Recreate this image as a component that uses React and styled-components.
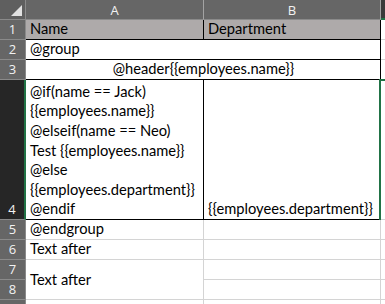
import React from 'react'
import styled, { createGlobalStyle } from 'styled-components'

const GlobalStyle = createGlobalStyle`
  html, body { margin: 0; padding: 0; background: #ffffff; }
`

// row 9 is only a sliver at the bottom edge, its number is not in view
const rows = [
  { n: '1', h: 20 },
  { n: '2', h: 20 },
  { n: '3', h: 20 },
  { n: '4', h: 140, active: true },
  { n: '5', h: 20 },
  { n: '6', h: 20 },
  { n: '7', h: 20 },
  { n: '8', h: 20 },
  { n: '', h: 20 },
]

const ifBlock = [
  '@if(name == Jack)',
  '{{employees.name}}',
  '@elseif(name == Neo)',
  'Test {{employees.name}}',
  '@else',
  '{{employees.department}}',
  '@endif',
]

function App() {
  return (
    <>
      <GlobalStyle />
      <Sheet>
        <Corner>
          <svg width="26" height="20" viewBox="0 0 26 20">
            <polygon points="22,5 22,16 11,16" fill="#e2e2e2" />
          </svg>
        </Corner>
        <ColHead $col={2}>A</ColHead>
        <ColHead $col={3}>B</ColHead>
        <ColHead $col={4} $active />

        {rows.map((r, i) => (
          <RowHead key={'r' + i} $row={i + 2} $active={r.active}>{r.n}</RowHead>
        ))}

        <Cell $col={2} $row={2} $fill="#aeaaaa" $dark>Name</Cell>
        <Cell $col={3} $row={2} $fill="#aeaaaa" $dark>Department</Cell>

        <Cell $col="2 / span 2" $row={3} $dark>@group</Cell>
        <Cell $col="2 / span 2" $row={4} $dark $align="center">@header{'{{employees.name}}'}</Cell>

        <Cell $col={2} $row={5} $dark>
          {ifBlock.map((line) => <Line key={line}>{line}</Line>)}
        </Cell>
        <Cell $col={3} $row={5} $dark>{'{{employees.department}}'}</Cell>

        <Cell $col={2} $row={6}>@endgroup</Cell>
        <Cell $col={3} $row={6} />
        <Cell $col={2} $row={7}>Text after</Cell>
        <Cell $col={3} $row={7} />
        <Cell $col={2} $row="8 / span 2" $middle>Text after</Cell>
        <Cell $col={3} $row={8} />
        <Cell $col={3} $row={9} />
        <Cell $col={2} $row={10} />
        <Cell $col={3} $row={10} />

        {rows.map((r, i) => (
          <Cell key={'c' + i} $col={4} $row={i + 2} $selected={r.active} />
        ))}
      </Sheet>
    </>
  )
}

const Sheet = styled.div`
  display: grid;
  grid-template-columns: 26px 178px 177px 1fr;
  grid-template-rows: 20px ${rows.map((r) => r.h + 'px').join(' ')};
  width: 385px;
  height: 304px;
  overflow: hidden;
  background: #ffffff;
  font-family: Lato, "Liberation Sans", sans-serif;
  font-size: 14.7px;
  color: #000000;
`

const Corner = styled.div`
  grid-column: 1;
  grid-row: 1;
  background: #5f5f5f;
  border-right: 1px solid #8a8a8a;
  border-bottom: 1px solid #8a8a8a;
  box-sizing: border-box;
  svg { display: block; }
`

const ColHead = styled.div`
  grid-column: ${(p) => p.$col};
  grid-row: 1;
  box-sizing: border-box;
  display: flex;
  align-items: center;
  justify-content: center;
  background: ${(p) => (p.$active ? '#3a3a3a' : '#666666')};
  border-right: 1px solid #a3a3a3;
  border-bottom: ${(p) => (p.$active ? '2px solid #217346' : '1px solid #8a8a8a')};
  color: #f2f2f2;
  font-family: "Open Sans", "Noto Sans", sans-serif;
  font-size: 13px;
  padding-top: 1px;
`

const RowHead = styled.div`
  grid-column: 1;
  grid-row: ${(p) => p.$row};
  box-sizing: border-box;
  display: flex;
  align-items: flex-end;
  justify-content: center;
  padding-bottom: 1px;
  background: ${(p) => (p.$active ? '#262626' : '#666666')};
  border-right: ${(p) => (p.$active ? '2px solid #217346' : '1px solid #8a8a8a')};
  border-bottom: 1px solid #8a8a8a;
  color: #f2f2f2;
  font-family: "Open Sans", "Noto Sans", sans-serif;
  font-size: 13px;
  line-height: 18px;
`

const Cell = styled.div`
  grid-column: ${(p) => p.$col};
  grid-row: ${(p) => p.$row};
  position: relative;
  box-sizing: border-box;
  display: flex;
  flex-direction: column;
  justify-content: ${(p) => (p.$middle ? 'center' : 'flex-end')};
  align-items: ${(p) => (p.$align === 'center' ? 'center' : 'flex-start')};
  padding: 0 3px 0 4px;
  background: ${(p) => p.$fill || '#ffffff'};
  border-right: 1px solid ${(p) => (p.$dark ? '#000000' : '#d4d4d4')};
  border-bottom: 1px solid ${(p) => (p.$dark ? '#000000' : '#d4d4d4')};
  line-height: 19.6px;
  white-space: nowrap;

  ${(p) =>
    p.$selected &&
    `
    &::before {
      content: '';
      position: absolute;
      top: -1px;
      left: -2px;
      right: 0;
      bottom: -1px;
      border-top: 2px solid #217346;
      border-left: 2px solid #217346;
    }
  `}
`

const Line = styled.div`
  line-height: 19.6px;
`

export default App
